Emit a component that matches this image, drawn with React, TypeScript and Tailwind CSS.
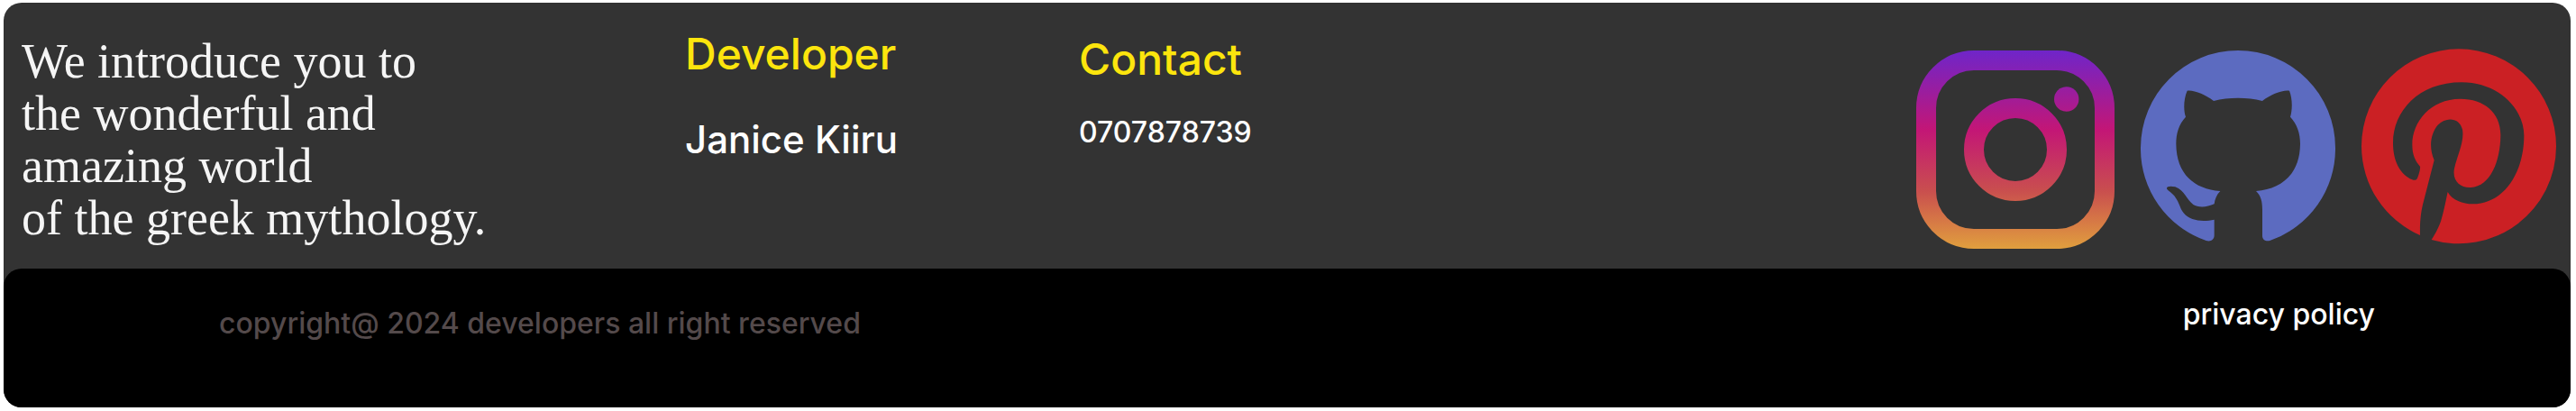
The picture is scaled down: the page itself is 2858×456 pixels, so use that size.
function InstagramIcon() {
  return (
    <svg viewBox="0 0 220 220" className="size-[220px]" fill="none" stroke="url(#instagram-gradient)" strokeWidth="22" aria-hidden="true">
      <defs>
        <linearGradient id="instagram-gradient" gradientUnits="userSpaceOnUse" x1="0" y1="0" x2="0" y2="220">
          <stop offset="0" stopColor="#6f25c9" />
          <stop offset="0.4" stopColor="#c31676" />
          <stop offset="0.71" stopColor="#c94f4e" />
          <stop offset="0.87" stopColor="#d77b45" />
          <stop offset="1" stopColor="#e09f3e" />
        </linearGradient>
      </defs>
      <rect x="11" y="11" width="198" height="198" rx="53" />
      <circle cx="110" cy="110" r="46" />
      <circle cx="166.700" cy="54" r="13.700" fill="url(#instagram-gradient)" stroke="none" />
    </svg>
  );
}

function GithubIcon() {
  return (
    <svg viewBox="75 79 648 648" className="size-[216px]" fill="#5c6bc0" aria-hidden="true">
      <path d="M320 642V695C320 709 307 717 293 712A324 324 0 0 1 75 403A324 324 0 0 1 399 79A324 324 0 0 1 723 403A324 324 0 0 1 505 712C492 716 480 709 480 696V610C480 580 475 562 459 547C545 540 605 490 606 390C606 355 596 325 573 300C580 278 581 240 570 213C545 210 508 226 480 247C430 234 368 234 318 247C290 226 253 210 230 213C218 240 217 278 225 300C202 325 193 355 193 390C194 490 253 540 340 547C327 560 322 575 320 590C295 602 265 602 250 592C227 575 222 545 190 533C170 528 158 533 163 541C168 547 178 552 187 563C207 590 205 605 218 620C240 648 285 650 320 642Z" />
    </svg>
  );
}

function PinterestIcon() {
  return (
    <svg viewBox="61 77 648 648" className="size-[216px] overflow-visible" fill="#cb2024" aria-hidden="true">
      <path d="M256 692C255 650 258 620 265 590L303 442C285 400 290 355 315 325C345 295 388 302 397 340C404 380 380 425 370 470C362 510 390 535 425 533C490 530 523 445 524 360C525 285 470 238 390 238C290 238 230 315 230 390C230 425 240 445 256 463C258 470 250 495 247 502C243 509 237 510 230 507C190 490 166 445 166 385C166 280 250 183 395 183C515 183 602 270 602 360C602 490 530 588 432 588C398 588 363 575 348 548C343 570 337 605 328 635C322 660 305 690 294 707A324 324 0 0 0 709 396A324 324 0 0 0 385 72A324 324 0 0 0 61 396A324 324 0 0 0 256 692Z" />
    </svg>
  );
}

export default function App() {
  return (
    <div className="bg-white pt-[3px] pr-[6px] pb-[4px] pl-[4px] font-['Inter',sans-serif] font-medium">
      <footer className="rounded-[20px] bg-[#333333]">
        <div className="flex items-start pr-4 pb-[22px] pl-5">
          <p className="w-[736px] shrink-0 pt-[36px] font-['Liberation_Serif',serif] text-[54px] leading-[58px] font-normal text-[#f5f5f5]">
            We introduce you to
            <br />
            the wonderful and
            <br />
            amazing world
            <br />
            of the greek mythology.
          </p>
          <section className="w-[437px] shrink-0 pt-[28px]">
            <h2 className="text-[48px] leading-[58px] text-[#fce50d]">Developer</h2>
            <p className="pt-[39px] text-[42px] leading-[53px] text-white">Janice Kiiru</p>
          </section>
          <section className="pt-[34px]">
            <h2 className="text-[48px] leading-[58px] text-[#fce50d]">Contact</h2>
            <p className="pt-8 text-[32px] leading-[39px] text-white">0707878739</p>
          </section>
          <nav aria-label="Social media" className="ml-auto flex items-start gap-[29px] pt-[53px]">
            <a href="#instagram" aria-label="Instagram">
              <InstagramIcon />
            </a>
            <a href="#github" aria-label="GitHub">
              <GithubIcon />
            </a>
            <a href="#pinterest" aria-label="Pinterest">
              <PinterestIcon />
            </a>
          </nav>
        </div>
        <div className="flex items-start justify-between rounded-[20px] bg-black pt-[31px] pr-[217px] pb-[74px] pl-[239px] text-[32px] leading-[39px]">
          <p className="pt-[10px] text-[#544a4b]">copyright@ 2024 developers all right reserved</p>
          <a href="#privacy" className="text-white">
            privacy policy
          </a>
        </div>
      </footer>
    </div>
  );
}
